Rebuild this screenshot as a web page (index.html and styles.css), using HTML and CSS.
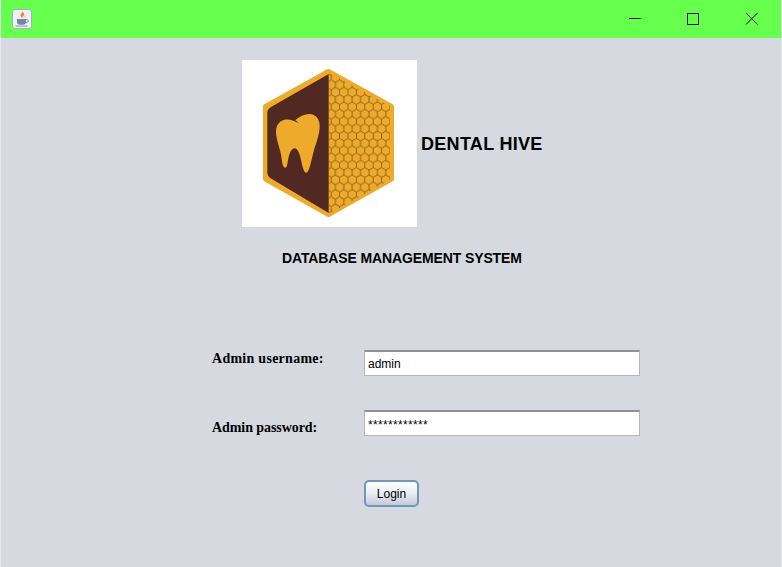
FILE: index.html
```html
<!DOCTYPE html>
<html lang="en">
<head>
  <meta charset="UTF-8">
  <meta name="viewport" content="width=device-width, initial-scale=1.0">
  <title>Dental Hive</title>
  <link rel="stylesheet" href="styles.css">
</head>
<body>
  <div class="window">
    <div class="titlebar">
      <svg class="app-icon" width="20" height="20" viewBox="0 0 20 20">
        <rect x="0.5" y="0.5" width="19" height="19" rx="2.5" fill="#eef0f6" stroke="#a3aec6"/>
        <path d="M10 1.500c2 1.800-2.500 3.200-1.300 5.800c.3.800 .8 1.300 1.500 2c-.2-1.500 3-2.800 1.700-5c-.5-.9-1.300-1.700-1.900-2.800z" fill="#ee8a35"/>
        <path d="M12.500 5.500c.8 1 .2 2.200-.6 3.200l1.100-.4c1-1 .6-2.100-.5-2.800z" fill="#f2b277"/>
        <path d="M5 10h9v3.200c0 1.600-1.400 2.500-2.800 2.500H7.800C6.400 15.700 5 14.800 5 13.200z" fill="#7088a6"/>
        <path d="M14 10.800h1.500c1.300 0 1.300 2.600-1.500 2.900" fill="none" stroke="#7088a6"/>
        <path d="M3.500 17h12" stroke="#7f93ad"/>
      </svg>
      <div class="window-controls">
        <svg width="162" height="38" viewBox="0 0 162 38">
          <path d="M9 18.500h12" stroke="#111"/>
          <rect x="67.500" y="13.500" width="11" height="11" fill="none" stroke="#111"/>
          <path d="M126 13l11.500 11.500M137.500 13L126 24.500" stroke="#111" fill="none"/>
        </svg>
      </div>
    </div>

    <div class="content">
      <div class="brand">
        <svg class="logo" width="175" height="167" viewBox="0 0 175 167">
          <defs>
            <pattern id="comb" width="8.4" height="14.6" patternUnits="userSpaceOnUse" x="1" y="3">
              <path d="M4.200 0v2.400M0 4.900L4.200 2.400L8.400 4.900V9.700L4.200 12.200L0 9.700zM4.200 12.200v2.400" fill="none" stroke="#86601c" stroke-width=".9"/>
            </pattern>
            <clipPath id="right-half">
              <path d="M87 13L148 46V120L87 154z"/>
            </clipPath>
          </defs>
          <path d="M86.500 11.500L149.500 46.500V119L86.500 154.500L23.500 119V46.500z" fill="#eeaa2b" stroke="#eeaa2b" stroke-width="5" stroke-linejoin="round"/>
          <rect x="86" y="10" width="66" height="146" fill="url(#comb)" clip-path="url(#right-half)"/>
          <path d="M86.700 14V153L29 118.500Q25.300 116.500 25.300 112V53Q25.300 49 29 47z" fill="#522822"/>
          <g transform="translate(-12 -10) scale(.3333)">
            <path d="M205 219C192 212 178 206 163 209C146 213 138 228 138 245C138 270 150 292 154 320C156 335 158 353 166 353C174 353 172 325 180 308C184 299 190 294 195 295C203 297 208 308 212 325C216 342 220 368 228 368C238 368 243 335 252 300C260 275 270 250 269 225C268 205 255 192 238 192C222 192 208 200 196 210C200 214 204 216 205 219z" fill="#eeaa2b"/>
          </g>
        </svg>
        <h1 class="brand-name">DENTAL HIVE</h1>
      </div>
      <h2 class="subtitle">DATABASE MANAGEMENT SYSTEM</h2>

      <form class="login-form">
        <label class="field-label field-label-high" for="username">Admin username:</label>
        <input class="field" type="text" id="username" value="admin">
        <label class="field-label field-label-low" for="password">Admin password:</label>
        <input class="field field-secret" type="text" id="password" value="************">
        <button class="login-btn" type="button">Login</button>
      </form>
    </div>
  </div>
</body>
</html>
```

FILE: styles.css
```css
body {
  margin: 0;
  background-color: #d6d9e0;
  font-family: "Liberation Sans", Arial, sans-serif;
  color: #000;
}

.window {
  height: 100vh;
  overflow: hidden;
  border-left: 1px solid #e4e7ec;
  border-right: 1px solid #e4e7ec;
  box-sizing: border-box;
}

.titlebar {
  height: 38px;
  background-color: #66ff4d;
  display: flex;
  align-items: center;
  justify-content: space-between;
  padding-left: 11px;
}

.app-icon {
  display: block;
  margin-top: -1px;
}

.window-controls {
  height: 38px;
  margin-right: -1px;
}

.window-controls svg {
  display: block;
}

.content {
  padding: 22px 0 0 241px;
}

.brand {
  display: flex;
  align-items: center;
  gap: 4px;
}

.logo {
  display: block;
  background: #fff;
}

.brand-name {
  margin: 0;
  font-size: 18px;
  font-weight: bold;
  line-height: 22px;
  letter-spacing: 0.3px;
}

.subtitle {
  margin: 23px 0 0 40px;
  font-size: 14px;
  font-weight: bold;
  line-height: 16px;
  letter-spacing: -0.12px;
}

.login-form {
  display: grid;
  grid-template-columns: 152px 276px;
  grid-template-rows: 26px 26px 27px;
  row-gap: 34px;
  margin: 84px 0 0 -30px;
}

.field-label {
  font-family: "Liberation Serif", "Times New Roman", serif;
  font-size: 14px;
  font-weight: bold;
  line-height: 16px;
}

.field-label-high {
  padding-top: 1px;
  letter-spacing: 0.27px;
}

.field-label-low {
  align-self: end;
  letter-spacing: -0.07px;
}

.field {
  box-sizing: border-box;
  width: 276px;
  height: 26px;
  padding: 1px 3px 0;
  border: 1px solid #b4b6ba;
  border-top: 2px solid #8f9194;
  background: #fff;
  font-family: "Liberation Sans", Arial, sans-serif;
  font-size: 12px;
  color: #000;
  outline: none;
}

.field-secret {
  letter-spacing: 0.33px;
  padding-top: 2px;
}

.login-btn {
  grid-column: 2;
  justify-self: start;
  box-sizing: border-box;
  width: 55px;
  height: 27px;
  margin-top: 10px;
  padding: 0;
  border: 2px solid #6f97bd;
  border-radius: 5px;
  background: linear-gradient(#ffffff, #e9edf2 50%, #c3cbd6);
  font-family: "Liberation Sans", Arial, sans-serif;
  font-size: 12px;
  color: #000;
  cursor: pointer;
}
```
